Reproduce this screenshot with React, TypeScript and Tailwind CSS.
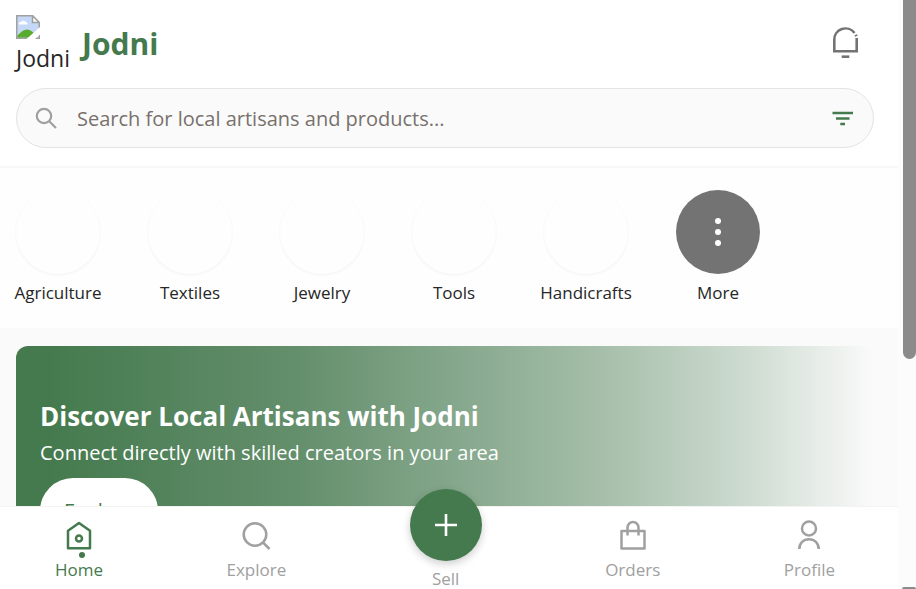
import type { ReactNode } from "react";

const categories = ["Agriculture", "Textiles", "Jewelry", "Tools", "Handicrafts"];

function LogoPlaceholder() {
  return (
    <svg width="24" height="24" viewBox="0 0 24 24" aria-hidden="true">
      <path d="M0.750 0.750H16.500L23.250 7.500V23.250H0.750Z" fill="#c6d8f7" stroke="#a0a0a0" strokeWidth="1.500" />
      <path d="M3 9.500a2 2 0 0 1 1.800-2.500a3 3 0 0 1 5 0a1.800 1.800 0 0 1 1.500 2.500Z" fill="#fff" />
      <path d="M1.500 22.500V20.500C5 16.500 8 14.500 11 14.500C15 15 19 18 20 22.500Z" fill="#57ab2f" />
      <path d="M16.500 0.750V7.500H23.250Z" fill="#fff" stroke="#a0a0a0" strokeWidth="1.500" />
      <path d="M10.500 24L24 12V19.500L19 24Z" fill="#fff" />
    </svg>
  );
}

function BellIcon() {
  return (
    <svg width="36" height="36" viewBox="0 0 36 36" fill="none" stroke="#737373" strokeWidth="2.600" aria-hidden="true">
      <path d="M26.500 7A11.200 11.200 0 0 0 6.300 14V25.200H28.700V12" />
      <path d="M26.800 10L29.300 9" strokeWidth="1.800" />
      <path d="M13.700 30.700H21.300" />
    </svg>
  );
}

function NavItem({ label, active = false, children }: { label: string; active?: boolean; children: ReactNode }) {
  return (
    <a
      href="#"
      aria-current={active ? "page" : undefined}
      className={
        active
          ? "relative flex flex-col items-center text-[#457a4e]"
          : "relative flex flex-col items-center text-[#a0a0a0]"
      }
    >
      {children}
      <span className="mt-1 text-[17px] leading-6">{label}</span>
      {active && <span className="absolute left-1/2 top-[34px] size-1.5 rounded-full bg-[#457a4e]" />}
    </a>
  );
}

export default function App() {
  return (
    <div className="flex h-screen overflow-hidden bg-[#fcfcfc] font-['Segoe_UI','Open_Sans','Noto_Sans',sans-serif] text-[#262626]">
      <div className="flex min-w-0 flex-1 flex-col bg-[#fafafa]">
        <main className="min-h-0 flex-1 overflow-hidden">
          <header className="border-b-2 border-[#f8f8f8] bg-white pb-[18px] pl-4 pr-6 pt-[15px]">
            <div className="flex h-[57px] items-center justify-between">
              <div className="flex items-center gap-3">
                <div className="flex flex-col">
                  <LogoPlaceholder />
                  <span className="mt-1 text-[23px] leading-[30px]">Jodni</span>
                </div>
                <h1 className="text-[30px] font-bold leading-9 text-[#457a4e]">Jodni</h1>
              </div>
              <button type="button" aria-label="Notifications" className="mr-[10px]">
                <BellIcon />
              </button>
            </div>
            <div className="mt-4 flex h-[60px] items-center rounded-full border border-[#e3e3e3] bg-[#fafafa] px-[18px]">
              <svg width="22" height="22" viewBox="0 0 22 22" fill="none" stroke="#a0a0a0" strokeWidth="2.200" aria-hidden="true">
                <circle cx="9" cy="9" r="7.200" />
                <path d="M14 14L21 21" />
              </svg>
              <input
                type="text"
                aria-label="Search"
                placeholder="Search for local artisans and products..."
                className="ml-5 min-w-0 flex-1 bg-transparent pt-0.5 text-[20px] leading-8 outline-none placeholder:text-[#78716c]"
              />
              <button type="button" aria-label="Filter">
                <svg width="24" height="24" viewBox="0 0 24 24" fill="none" stroke="#457a4e" strokeWidth="2.300" aria-hidden="true">
                  <path d="M1.500 7H22M5 12.500H18.500M9.300 18H14" />
                </svg>
              </button>
            </div>
          </header>

          <section aria-label="Categories" className="flex gap-12 bg-[#fefefe] pb-[23px] pl-4 pt-[22px]">
            {categories.map((name) => (
              <a key={name} href="#" className="flex w-[84px] shrink-0 flex-col items-center">
                <span className="size-[84px] rounded-full bg-[#fefefe] shadow-[0_1px_3px_rgba(0,0,0,0.05)]" />
                <span className="mt-[7px] whitespace-nowrap text-[17px] leading-6">{name}</span>
              </a>
            ))}
            <button type="button" className="flex w-[84px] shrink-0 flex-col items-center">
              <span className="flex size-[84px] flex-col items-center justify-center gap-[5px] rounded-full bg-[#737373]">
                <span className="size-1.5 rounded-full bg-white" />
                <span className="size-1.5 rounded-full bg-white" />
                <span className="size-1.5 rounded-full bg-white" />
              </span>
              <span className="mt-[7px] text-[17px] leading-6">More</span>
            </button>
          </section>

          <section className="ml-4 mr-6 mt-[18px] rounded-xl bg-[linear-gradient(to_right,#457a4e_0%,#457a4e_4%,#648f6c_33%,#83a68a_50%,#a5bea9_68%,#cddbd0_85%,#fafafa_100%)] px-6 pb-12 pt-[52px] text-white">
            <h2 className="text-[26px] font-bold leading-9">Discover Local Artisans with Jodni</h2>
            <p className="mt-1 text-[20px] leading-[30px]">Connect directly with skilled creators in your area</p>
            <button type="button" className="mt-2.5 h-[66px] rounded-full bg-white px-6 text-[20px] font-medium text-[#457a4e]">
              Explore
            </button>
          </section>
        </main>

        <nav className="relative flex h-[83px] shrink-0 items-start justify-between border-t border-[#f3f3f3] bg-white pl-[55px] pr-[63px] pt-[11px]">
          <NavItem label="Home" active>
            <svg width="36" height="36" viewBox="0 0 36 36" fill="none" stroke="currentColor" strokeWidth="2.500" aria-hidden="true">
              <path d="M7 12.800L18 5L29 12.800V30.200H7Z" strokeLinejoin="round" />
              <circle cx="18" cy="20.500" r="3" />
            </svg>
          </NavItem>
          <NavItem label="Explore">
            <svg width="36" height="36" viewBox="0 0 36 36" fill="none" stroke="currentColor" strokeWidth="2.500" aria-hidden="true">
              <circle cx="17" cy="16.500" r="11.300" />
              <path d="M25 24.500L31.500 31" />
            </svg>
          </NavItem>
          <button type="button" className="-mt-[29px] flex flex-col items-center">
            <span className="flex size-[72px] items-center justify-center rounded-full bg-[#457a4e] shadow-[0_3px_8px_rgba(0,0,0,0.2)]">
              <svg width="24" height="24" viewBox="0 0 24 24" fill="none" stroke="#fff" strokeWidth="2.600" aria-hidden="true">
                <path d="M12 1V23M1 12H23" />
              </svg>
            </span>
            <span className="mt-1.5 text-[17px] leading-6 text-[#a0a0a0]">Sell</span>
          </button>
          <NavItem label="Orders">
            <svg width="36" height="36" viewBox="0 0 36 36" fill="none" stroke="currentColor" strokeWidth="2.500" aria-hidden="true">
              <rect x="6.500" y="13" width="23" height="17.500" strokeLinejoin="round" />
              <path d="M12.500 17.500V9.500A5.500 5.500 0 0 1 23.500 9.500V17.500" />
            </svg>
          </NavItem>
          <NavItem label="Profile">
            <svg width="36" height="36" viewBox="0 0 36 36" fill="none" stroke="currentColor" strokeWidth="2.500" aria-hidden="true">
              <circle cx="18" cy="10.500" r="7" />
              <path d="M8.300 31C8.300 25 12.500 21.300 18 21.300S27.700 25 27.700 31" />
            </svg>
          </NavItem>
        </nav>
      </div>

      <div className="flex w-[18px] shrink-0 flex-col items-end justify-between">
        <div className="h-[61%] w-[13px] rounded-b-full bg-[#8b8b8b]" />
        <div className="h-0.5 w-[14px] rounded-t-full bg-[#8b8b8b]" />
      </div>
    </div>
  );
}
